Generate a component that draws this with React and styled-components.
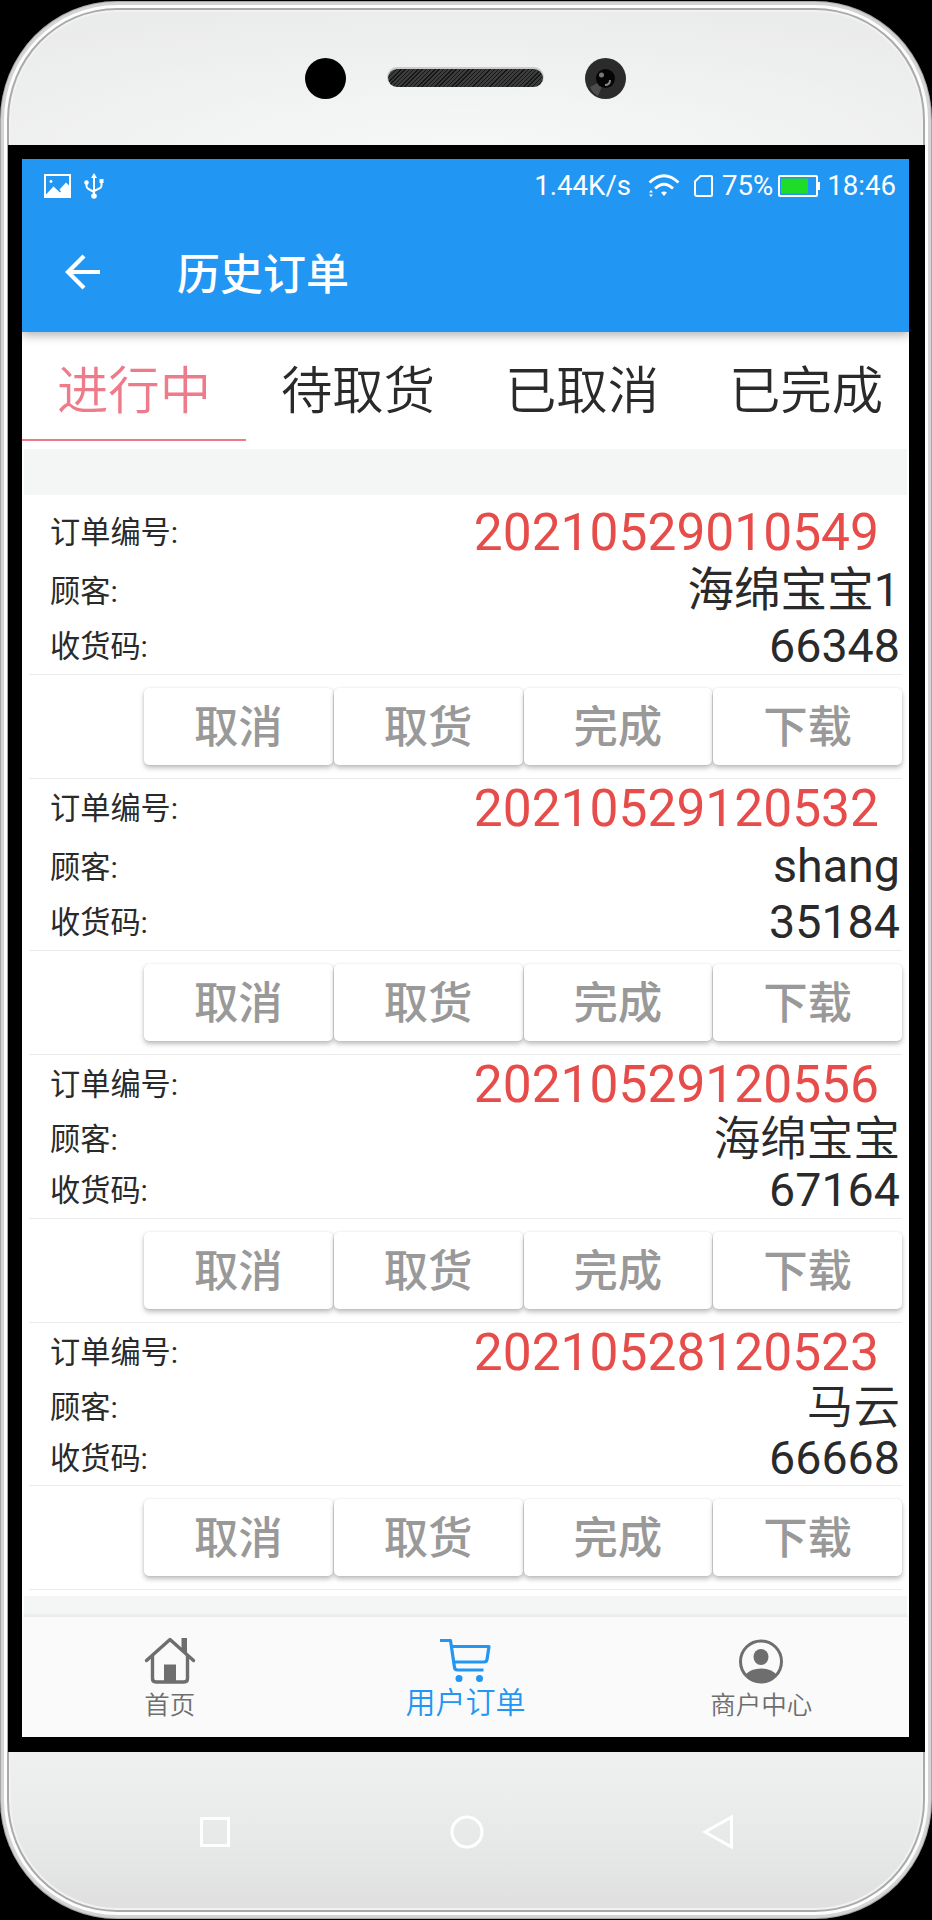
import React from "react";
import styled, { createGlobalStyle } from "styled-components";

const color = {
  primary: "#2196f3",
  accent: "#ee7b89",
  danger: "#e64c4a",
  text: "#2a2a2a",
  muted: "#999999",
  nav: "#6e6e6e",
  line: "#ebebeb",
  backdrop: "#f4f6f6",
};

const GlobalStyle = createGlobalStyle`
  * {
    box-sizing: border-box;
  }

  body {
    margin: 0;
    background: #000;
    font-family: Roboto, "Noto Sans CJK SC", sans-serif;
    color: ${color.text};
  }

  button {
    font: inherit;
    border: 0;
    padding: 0;
    background: none;
  }
`;

const Phone = styled.div`
  display: flex;
  flex-direction: column;
  width: 932px;
  height: 1918px;
  padding: 0 8px;
  border-radius: 117px / 119px;
  background: radial-gradient(
      ellipse 640px 150px at 50% 150px,
      rgba(246, 248, 248, 1),
      rgba(246, 248, 248, 0)
    ),
    linear-gradient(#eaebeb 0, #ececec 8%, #f0f0f0 91%, #e7e9e9 96%, #e0e0e0 99%);
  box-shadow: inset 0 0 0 1px #a8a8aa, inset 0 0 0 4px #d4d4d6,
    inset 0 0 0 7px #fdfdfd, inset 0 0 0 9px #a9aaaa, inset 0 0 0 11px #f2f2f2;
  margin-top: 1px;
`;

const Forehead = styled.div`
  display: flex;
  align-items: center;
  gap: 42px;
  flex: 0 0 144px;
  padding: 10px 0 0 297px;
`;

const Sensor = styled.div`
  width: 41px;
  height: 41px;
  border-radius: 50%;
  background: #000;
`;

const Speaker = styled.div`
  width: 155px;
  height: 18px;
  border-radius: 9px;
  background: repeating-linear-gradient(135deg, #161616 0 1px, #3c3c3c 1px 3px);
  box-shadow: 0 -1px 0 1px #c9cbcf;
`;

const Frame = styled.div`
  flex: 0 0 1607px;
  width: 917px;
  padding: 14px 16px 15px 14px;
  background: #000;
`;

const Screen = styled.div`
  display: flex;
  flex-direction: column;
  width: 887px;
  height: 1578px;
  overflow: hidden;
  background: #fff;
`;

const AppBar = styled.header`
  position: relative;
  flex: 0 0 173px;
  background: ${color.primary};
  color: #fff;
  box-shadow: 0 3px 10px rgba(0, 0, 0, 0.32);
`;

const StatusBar = styled.div`
  display: flex;
  align-items: center;
  height: 53px;
  padding: 0 13px 0 22px;
  font-size: 27.6px;
  line-height: 53px;

  .status__usb {
    margin-left: 13px;
  }

  .status__speed {
    margin-left: auto;
  }

  .status__wifi {
    margin-left: 17px;
  }

  .status__sim {
    margin: 0 9px 0 14px;
  }

  .status__battery {
    margin: 0 7px 0 5px;
  }
`;

const TitleBar = styled.div`
  display: flex;
  align-items: center;
  height: 120px;
  padding-left: 43px;

  h1 {
    margin: 0 0 0 77px;
    padding-top: 5px;
    font-size: 43px;
    font-weight: 500;
    line-height: 60px;
  }
`;

const Tabs = styled.nav`
  display: flex;
  flex: 0 0 117px;
  width: 896px;
`;

const Tab = styled.button`
  flex: 1;
  height: 109px;
  padding-top: 13px;
  border-bottom: 2px solid
    ${({ $active }) => ($active ? color.accent : "transparent")};
  color: ${({ $active }) => ($active ? color.accent : color.text)};
  font-size: 51.4px;
  font-weight: 350;
  line-height: 94px;
  white-space: nowrap;
`;

const Content = styled.main`
  flex: 1;
  margin: 0 2px;
  padding-top: 46px;
  background: ${color.backdrop};
`;

const OrderList = styled.ul`
  list-style: none;
  margin: 0;
  height: 1101px;
  padding: 8px 5px 0;
  background: #fff;
`;

const OrderStyled = styled.li`
  border-bottom: 1px solid ${color.line};

  .order__info {
    border-bottom: 1px solid ${color.line};
  }

  .order__actions {
    display: grid;
    grid-template-columns: repeat(4, 1fr);
    gap: 1px;
    height: 103px;
    padding: 13px 0 13px 115px;
  }
`;

const InfoRow = styled.div`
  display: flex;
  align-items: center;
  justify-content: space-between;
  height: ${({ $height }) => $height}px;
  padding: 0 2px 0 21px;
  line-height: 50px;
`;

const Label = styled.span`
  font-size: 30.2px;
`;

const Value = styled.span`
  padding-bottom: ${({ $lift }) => $lift || 2}px;
  font-size: 46.6px;
  font-weight: ${({ $light }) => ($light ? 350 : 400)};
`;

const OrderNumber = styled.span`
  margin-right: 21px;
  color: ${color.danger};
  font-size: 51.5px;
`;

const ActionButton = styled.button`
  height: 77px;
  padding-top: 4px;
  border-radius: 5px;
  background: #fff;
  box-shadow: 0 3px 5px rgba(0, 0, 0, 0.26), 0 0 2px rgba(0, 0, 0, 0.1);
  color: ${color.muted};
  font-size: 44.4px;
  font-weight: 500;
  line-height: 73px;
`;

const BottomNav = styled.nav`
  position: relative;
  display: flex;
  flex: 0 0 120px;
  background: #fafafa;
  box-shadow: 0 -1px 5px rgba(0, 0, 0, 0.08);
`;

const NavItem = styled.button`
  display: flex;
  flex: 1;
  flex-direction: column;
  align-items: center;
  padding-top: 20px;
  color: ${({ $active }) => ($active ? color.primary : color.nav)};
  font-size: ${({ $active }) => ($active ? 30 : 25.5)}px;
  font-weight: 350;
  line-height: 40px;

  svg {
    flex: none;
  }
`;

const Chin = styled.div`
  display: flex;
  align-items: center;
  justify-content: space-between;
  flex: 1;
  padding: 0 190px 8px 191px;
`;

const Camera = () => (
  <svg width="41" height="41" viewBox="0 0 41 41">
    <circle cx="20.5" cy="20.5" r="20.5" fill="#2b2b2b" />
    <path d="M20 21 5 29a17 17 0 0 0 8 9z" fill="#6d6d6d" opacity=".5" />
    <circle cx="20.5" cy="20.5" r="9.5" fill="#050505" />
    <circle cx="16.5" cy="17" r="2.5" fill="#777" />
    <path d="M20 27q5 0 5-5" fill="none" stroke="#888" strokeWidth="2" />
  </svg>
);

const PictureIcon = () => (
  <svg width="27" height="24" viewBox="0 0 27 24">
    <rect x="1" y="1" width="25" height="22" fill="none" stroke="#fff" strokeWidth="2" />
    <circle cx="7" cy="7.5" r="1.4" fill="#fff" />
    <path d="M2 20.5 9.5 12.5 16 18.5 17 17.5 15.5 15.5 22 8.5 26 12.5V23H2z" fill="#fff" />
  </svg>
);

const UsbIcon = () => (
  <svg className="status__usb" width="20" height="26" viewBox="0 0 20 26">
    <g fill="none" stroke="#fff" strokeWidth="2">
      <path d="M10 3v20M2.5 10v3q0 2 2 3l5.500 3M17.5 8v4.500q0 2-2 2.800L10 18" />
    </g>
    <path d="M10 0l3 5H7zM15.5 6h4v4h-4z" fill="#fff" />
    <circle cx="2.5" cy="9.5" r="2.3" fill="#fff" />
    <circle cx="10" cy="23" r="2.8" fill="#fff" />
  </svg>
);

const WifiIcon = () => (
  <svg className="status__wifi" width="32" height="24" viewBox="0 0 32 24">
    <g fill="none" stroke="#fff" strokeWidth="2.8">
      <path d="M1.500 8.500Q16-5 30.500 8.500" />
      <path d="M7 14.500q9-8.500 18 0" />
    </g>
    <path d="M13 18.500q3-1.800 6 0L16 22z" fill="#fff" />
    <path d="M1 18.500 3 16l2 2.500zM1 20.500h4L3 23z" fill="#fff" />
  </svg>
);

const SimIcon = () => (
  <svg className="status__sim" width="19" height="22" viewBox="0 0 19 22">
    <path
      d="M6.500 1H17a1 1 0 0 1 1 1v18a1 1 0 0 1-1 1H3a2 2 0 0 1-2-2V6.500z"
      fill="none"
      stroke="#fff"
      strokeWidth="2"
    />
  </svg>
);

const BatteryIcon = () => (
  <svg className="status__battery" width="42" height="22" viewBox="0 0 42 22">
    <rect x="1" y="1" width="38" height="20" rx="1" fill="none" stroke="#fff" strokeWidth="2" />
    <path d="M3 3.500h27v15H3z" fill="#1fdc28" />
    <path d="M40 7h2v8h-2z" fill="#fff" />
  </svg>
);

const BackIcon = () => (
  <svg width="35" height="36" viewBox="0 0 35 36">
    <path d="M19 2 3 18l16 16M3 18h32" fill="none" stroke="#fff" strokeWidth="4.2" />
  </svg>
);

const HomeIcon = () => (
  <svg width="52" height="48" viewBox="0 0 52 48">
    <g fill="none" stroke="currentColor" strokeWidth="3.4" strokeLinecap="round" strokeLinejoin="round">
      <path d="M2.500 23.500 26 2.500 49.500 23.500" />
      <path d="M8.500 18.500V41.500q0 3.500 3.500 3.500h28q3.500 0 3.500-3.500V18.500" />
    </g>
    <path d="M37.500 1H43v17l-5.500-5zM20 27.500h12V45H20z" fill="currentColor" />
  </svg>
);

const CartIcon = () => (
  <svg width="52" height="46" viewBox="0 0 52 46">
    <g fill="none" stroke="currentColor" strokeWidth="3.2" strokeLinejoin="round">
      <path d="M0 3.500h10.500L14.500 30.500q.4 2.500 3 2.500H43.500" />
      <path d="M12 9.500h37L47 22.500q-.4 2.500-3 2.500H14.500" />
    </g>
    <circle cx="19" cy="41.5" r="3.5" fill="currentColor" />
    <circle cx="39.5" cy="41.5" r="3.5" fill="currentColor" />
  </svg>
);

const UserIcon = () => (
  <svg width="46" height="48" viewBox="0 0 46 48">
    <circle cx="23" cy="24.5" r="20.5" fill="none" stroke="currentColor" strokeWidth="3" />
    <ellipse cx="23" cy="20" rx="7.5" ry="8" fill="currentColor" />
    <path d="M7.500 37.500Q13 31.500 23 31.500t15.500 6Q32 46 23 46T7.500 37.500z" fill="currentColor" />
  </svg>
);

const tabs = ["进行中", "待取货", "已取消", "已完成"];
const actions = ["取消", "取货", "完成", "下载"];

const wideRows = [60, 57, 54];
const compactRows = [60, 50, 52.5];

const orders = [
  { number: "20210529010549", customer: "海绵宝宝1", code: "66348", rows: wideRows },
  { number: "20210529120532", customer: "shang", code: "35184", rows: wideRows },
  { number: "20210529120556", customer: "海绵宝宝", code: "67164", rows: compactRows },
  { number: "20210528120523", customer: "马云", code: "66668", rows: compactRows },
];

const navItems = [
  { label: "首页", Icon: HomeIcon },
  { label: "用户订单", Icon: CartIcon, active: true },
  { label: "商户中心", Icon: UserIcon },
];

const isChinese = (text) => /^[\u4e00-\u9fa5]+$/.test(text);

const Order = ({ number, customer, code, rows }) => {
  return (
    <OrderStyled>
      <div className="order__info">
        <InfoRow $height={rows[0]}>
          <Label>订单编号:</Label>
          <OrderNumber>{number}</OrderNumber>
        </InfoRow>
        <InfoRow $height={rows[1]}>
          <Label>顾客:</Label>
          <Value $light={isChinese(customer)} $lift={rows[1] > 50 ? 4 : 2}>
            {customer}
          </Value>
        </InfoRow>
        <InfoRow $height={rows[2]}>
          <Label>收货码:</Label>
          <Value>{code}</Value>
        </InfoRow>
      </div>
      <div className="order__actions">
        {actions.map((action) => (
          <ActionButton key={action}>{action}</ActionButton>
        ))}
      </div>
    </OrderStyled>
  );
};

const App = () => {
  return (
    <>
      <GlobalStyle />
      <Phone>
        <Forehead>
          <Sensor />
          <Speaker />
          <Camera />
        </Forehead>

        <Frame>
          <Screen>
            <AppBar>
              <StatusBar>
                <PictureIcon />
                <UsbIcon />
                <span className="status__speed">1.44K/s</span>
                <WifiIcon />
                <SimIcon />
                <span>75%</span>
                <BatteryIcon />
                <span>18:46</span>
              </StatusBar>
              <TitleBar>
                <BackIcon />
                <h1>历史订单</h1>
              </TitleBar>
            </AppBar>

            <Tabs>
              {tabs.map((tab, i) => (
                <Tab key={tab} $active={i === 0}>
                  {tab}
                </Tab>
              ))}
            </Tabs>

            <Content>
              <OrderList>
                {orders.map((order) => (
                  <Order key={order.number} {...order} />
                ))}
              </OrderList>
            </Content>

            <BottomNav>
              {navItems.map(({ label, Icon, active }) => (
                <NavItem key={label} $active={active}>
                  <Icon />
                  {label}
                </NavItem>
              ))}
            </BottomNav>
          </Screen>
        </Frame>

        <Chin>
          <svg width="32" height="32" viewBox="0 0 32 32">
            <rect x="2.5" y="2.5" width="27" height="27" fill="none" stroke="#fff" strokeWidth="3" />
          </svg>
          <svg width="34" height="34" viewBox="0 0 34 34">
            <circle cx="17" cy="17" r="15" fill="none" stroke="#fff" strokeWidth="3" />
          </svg>
          <svg width="32" height="36" viewBox="0 0 32 36">
            <path d="M3 18 29.500 3v30z" fill="none" stroke="#fff" strokeWidth="3" />
          </svg>
        </Chin>
      </Phone>
    </>
  );
};

export default App;
